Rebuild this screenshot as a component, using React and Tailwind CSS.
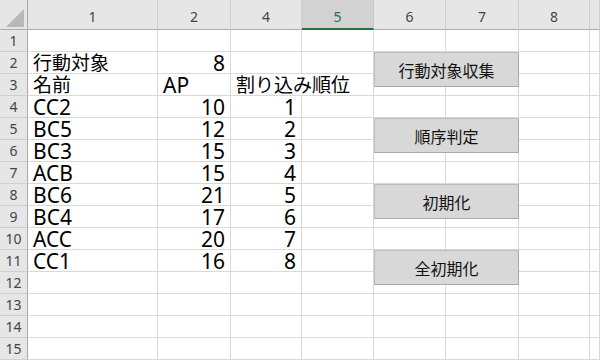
import React from 'react';

const COLS = ['1', '2', '4', '5', '6', '7', '8', ''];
const SELECTED_COL = '5';

// sheet contents, keyed by row number -> [col1, col2, col4]
const data = {
  2: [{ v: '行動対象', jp: true }, { v: '8', right: true }, null],
  3: [{ v: '名前', jp: true }, { v: 'AP' }, { v: '割り込み順位', jp: true }],
  4: [{ v: 'CC2' }, { v: '10', right: true }, { v: '1', right: true }],
  5: [{ v: 'BC5' }, { v: '12', right: true }, { v: '2', right: true }],
  6: [{ v: 'BC3' }, { v: '15', right: true }, { v: '3', right: true }],
  7: [{ v: 'ACB' }, { v: '15', right: true }, { v: '4', right: true }],
  8: [{ v: 'BC6' }, { v: '21', right: true }, { v: '5', right: true }],
  9: [{ v: 'BC4' }, { v: '17', right: true }, { v: '6', right: true }],
  10: [{ v: 'ACC' }, { v: '20', right: true }, { v: '7', right: true }],
  11: [{ v: 'CC1' }, { v: '16', right: true }, { v: '8', right: true }],
};

const buttons = [
  { label: '行動対象収集', top: 52 },
  { label: '順序判定', top: 118 },
  { label: '初期化', top: 184 },
  { label: '全初期化', top: 250 },
];

const font = "font-['Noto_Sans','Noto_Sans_CJK_JP',sans-serif]";

const Cell = ({ cell, noRight }) => (
  <div
    className={`h-[22px] border-b border-[#d9d9d9] ${noRight ? '' : 'border-r'} flex items-end whitespace-nowrap overflow-visible ${
      cell?.right ? 'justify-end pr-[5px]' : 'pl-[5px]'
    }`}
  >
    {cell && (
      <span className={`${cell.jp ? 'text-[19px]' : 'text-[21px]'} leading-[20px] text-black`}>
        {cell.v}
      </span>
    )}
  </div>
);

export default function App() {
  const rows = Array.from({ length: 15 }, (_, i) => i + 1);

  return (
    <div className={`relative w-[600px] h-[360px] overflow-hidden bg-white ${font}`}>
      <div className="grid grid-cols-[28px_130px_73px_71px_72px_72px_73px_71px_1fr] grid-rows-[30px_repeat(15,22px)]">
        {/* corner */}
        <div className="bg-[#e6e6e6] border-r border-b border-[#ababab] flex items-end justify-end pr-[3px] pb-[2px]">
          <svg width="18" height="18" viewBox="0 0 18 18">
            <polygon points="18,0 18,18 0,18" fill="#b7b7b7" />
          </svg>
        </div>
        {/* column headers */}
        {COLS.map((c, i) => (
          <div
            key={i}
            className={`flex items-center justify-center pt-[4px] text-[14px] ${
              c === SELECTED_COL
                ? 'bg-[#d2d2d2] text-[#217346] border-b-2 border-b-[#217346] border-r border-r-[#c6c6c6]'
                : 'bg-[#e6e6e6] text-[#444] border-b border-b-[#ababab] border-r border-r-[#cfcfcf]'
            }`}
          >
            {c}
          </div>
        ))}

        {rows.map((r) => {
          const cells = data[r] || [];
          return (
            <React.Fragment key={r}>
              <div className="bg-[#e6e6e6] border-r border-r-[#ababab] border-b border-b-[#cfcfcf] flex items-center justify-center text-[14px] text-[#444]">
                {r}
              </div>
              <Cell cell={cells[0]} />
              <Cell cell={cells[1]} />
              <Cell cell={cells[2]} noRight={r === 3} />
              {[0, 1, 2, 3, 4].map((k) => (
                <div key={k} className="h-[22px] border-b border-r border-[#d9d9d9]" />
              ))}
            </React.Fragment>
          );
        })}
      </div>

      {/* shapes placed on the sheet */}
      {buttons.map((b) => (
        <div
          key={b.label}
          style={{ top: b.top }}
          className="absolute left-[374px] w-[145px] h-[35px] bg-[#d8d8d8] border border-[#bcbcbc] border-r-[#a9a9a9] border-b-[#a9a9a9] flex items-center justify-center"
        >
          <span className="text-[16px] text-[#111] font-['Noto_Sans_CJK_JP',sans-serif]">{b.label}</span>
        </div>
      ))}
    </div>
  );
}
